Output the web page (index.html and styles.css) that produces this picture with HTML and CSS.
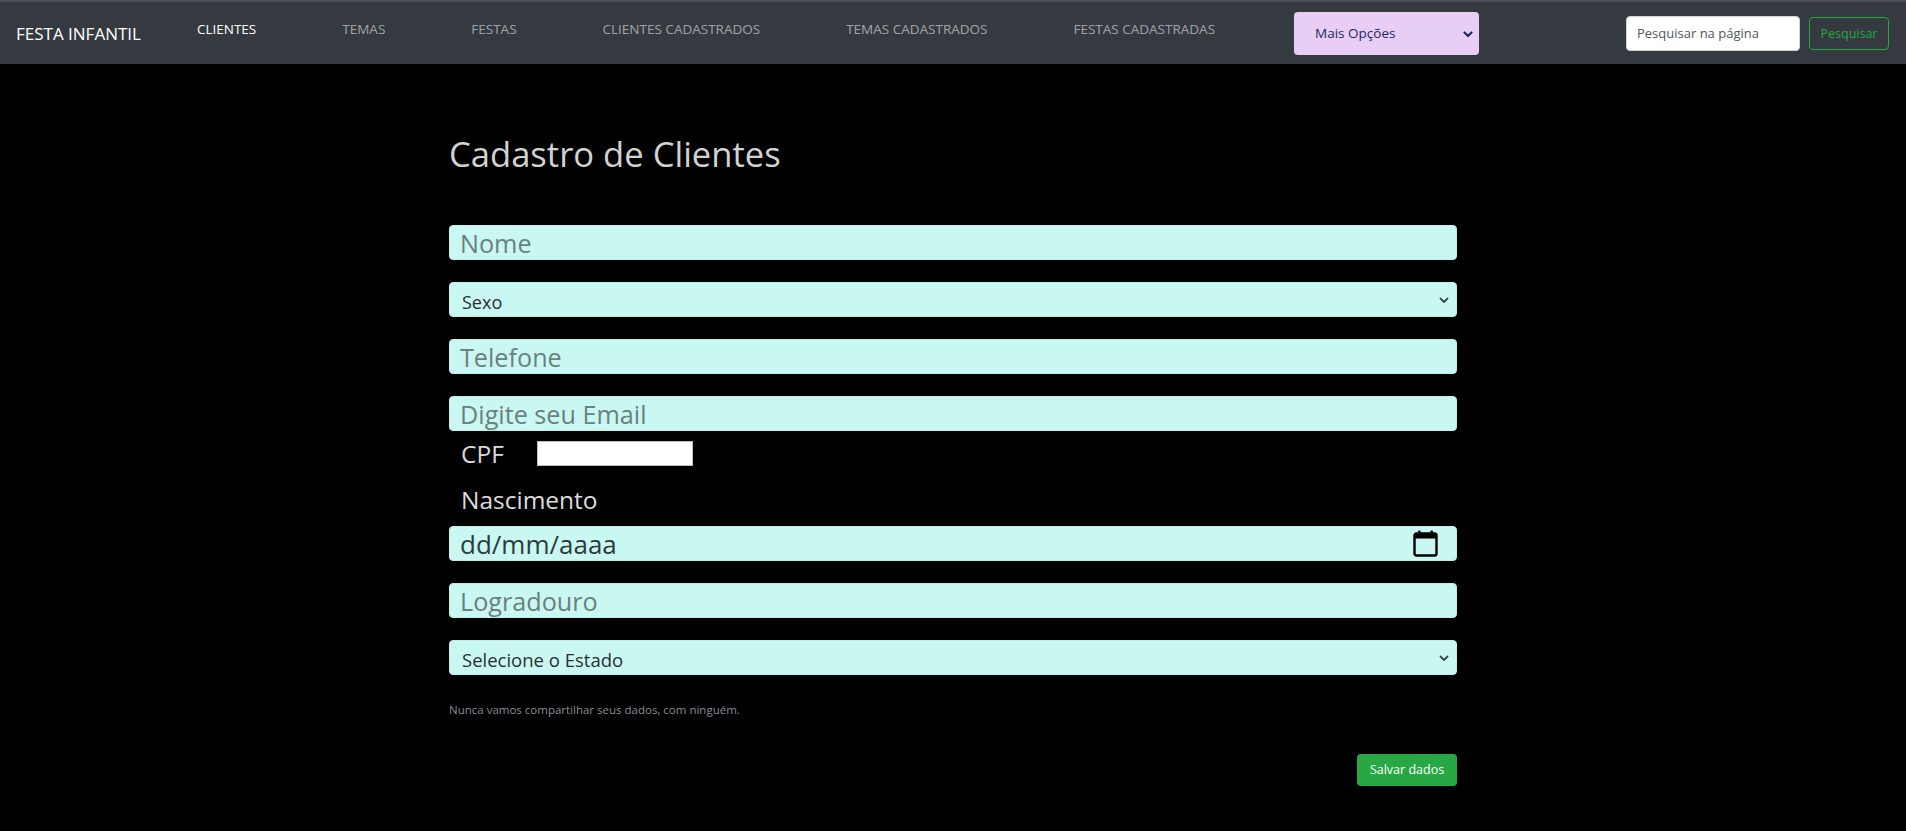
FILE: index.html
```html
<!DOCTYPE html>
<html lang="pt-BR">
<head>
<meta charset="utf-8">
<title>Cadastro de Clientes</title>
<link rel="stylesheet" href="styles.css">
</head>
<body>
<nav class="navbar">
  <span class="brand">FESTA INFANTIL</span>
  <ul class="nav">
    <li><a class="active" href="#">CLIENTES</a></li>
    <li><a href="#">TEMAS</a></li>
    <li><a href="#">FESTAS</a></li>
    <li><a href="#">CLIENTES CADASTRADOS</a></li>
    <li><a href="#">TEMAS CADASTRADOS</a></li>
    <li><a href="#">FESTAS CADASTRADAS</a></li>
  </ul>
  <div class="more-wrap">
    <select class="more"><option>Mais Opções</option></select>
    <svg class="more-chev" width="10" height="7" viewBox="0 0 10 7"><polyline points="1.5,1.5 5,5 8.5,1.5" fill="none" stroke="#1c2a5c" stroke-width="2.2" stroke-linecap="round" stroke-linejoin="round"/></svg>
  </div>
  <form class="search">
    <input class="search-input" type="text" placeholder="Pesquisar na página">
    <button class="search-btn" type="button">Pesquisar</button>
  </form>
</nav>

<main class="container">
  <h1 class="title">Cadastro de Clientes</h1>
  <form class="form">
    <input class="field" type="text" placeholder="Nome">
    <div class="select-wrap">
      <select class="field field-select"><option>Sexo</option></select>
      <svg class="chev" width="10" height="7" viewBox="0 0 10 7"><polyline points="1.5,1.5 5,5 8.5,1.5" fill="none" stroke="#3d4a4a" stroke-width="1.8" stroke-linecap="round" stroke-linejoin="round"/></svg>
    </div>
    <input class="field" type="text" placeholder="Telefone">
    <input class="field field-last" type="email" placeholder="Digite seu Email">
    <div class="cpf-row">
      <label class="cpf-label">CPF</label>
      <input class="cpf-input" type="text">
    </div>
    <label class="birth-label">Nascimento</label>
    <div class="date-wrap">
      <input class="field field-date" type="text" placeholder="dd/mm/aaaa">
      <svg class="cal" width="25" height="27" viewBox="0 0 25 27">
        <rect x="5" y="0.5" width="2.6" height="5" rx="1" fill="#000"/>
        <rect x="17.4" y="0.5" width="2.6" height="5" rx="1" fill="#000"/>
        <rect x="1.5" y="3.5" width="22" height="22" rx="2" fill="none" stroke="#000" stroke-width="2.4"/>
        <rect x="1.5" y="3.5" width="22" height="5" fill="#000"/>
      </svg>
    </div>
    <input class="field" type="text" placeholder="Logradouro">
    <div class="select-wrap">
      <select class="field field-select field-state"><option>Selecione o Estado</option></select>
      <svg class="chev" width="10" height="7" viewBox="0 0 10 7"><polyline points="1.5,1.5 5,5 8.5,1.5" fill="none" stroke="#3d4a4a" stroke-width="1.8" stroke-linecap="round" stroke-linejoin="round"/></svg>
    </div>
    <small class="help">Nunca vamos compartilhar seus dados, com ninguém.</small>
    <div class="actions">
      <button class="save" type="button">Salvar dados</button>
    </div>
  </form>
</main>
</body>
</html>
```

FILE: styles.css
```css
* { box-sizing: border-box; }

html, body {
  margin: 0;
  padding: 0;
  background: #000;
  font-family: "Open Sans", "Noto Sans", sans-serif;
}

/* ---------- navbar ---------- */
.navbar {
  display: flex;
  align-items: center;
  height: 64px;
  padding: 0 17px 0 16px;
  background: #343a40;
  border-top: 2px solid #4a4f55;
}

.brand {
  color: #fff;
  font-size: 17px;
  margin-right: 13px;
  white-space: nowrap;
}

.nav {
  display: flex;
  list-style: none;
  margin: 0 0 8px 0;
  padding: 0;
}

.nav a {
  display: block;
  padding: 0 43px;
  font-size: 13.5px;
  line-height: 20px;
  color: rgba(255, 255, 255, 0.55);
  text-decoration: none;
  white-space: nowrap;
}

.nav a.active { color: #fff; }

.more-wrap {
  position: relative;
  margin-left: 36px;
}

.more {
  appearance: none;
  -webkit-appearance: none;
  width: 185px;
  height: 43px;
  padding: 0 0 0 21px;
  border: none;
  border-radius: 4px;
  background: #e8cdf5;
  color: #1c2a5c;
  font-family: "Open Sans", "Noto Sans", sans-serif;
  font-size: 13.5px;
}

.more-chev {
  position: absolute;
  right: 6px;
  top: 19px;
  pointer-events: none;
}

.search {
  display: flex;
  align-items: center;
  margin-left: auto;
}

.search-input {
  width: 174px;
  height: 35px;
  padding: 0 10px;
  border: 1px solid #ced4da;
  border-radius: 4px;
  background: #fff;
  font-family: "Open Sans", "Noto Sans", sans-serif;
  font-size: 13px;
  color: #495057;
}

.search-input::placeholder { color: #50565c; }

.search-btn {
  width: 80px;
  height: 33px;
  margin-left: 9px;
  padding: 0;
  border: 1px solid #28a745;
  border-radius: 4px;
  background: transparent;
  color: #28a745;
  font-family: "Open Sans", "Noto Sans", sans-serif;
  font-size: 12.5px;
}

/* ---------- main ---------- */
.container {
  width: 1008px;
  margin: 0 auto;
  padding-top: 69px;
}

.title {
  margin: 0 0 50px 0;
  font-size: 34.6px;
  font-weight: 400;
  line-height: 1.2;
  color: #d2d2d2;
}

.form {
  display: flex;
  flex-direction: column;
}

.field {
  display: block;
  width: 100%;
  height: 35px;
  margin: 0 0 22px 0;
  padding: 2px 10px 0;
  border: 1px solid #bfeee8;
  border-radius: 4px;
  background: #c9f8f2;
  font-family: "Open Sans", "Noto Sans", sans-serif;
  font-size: 25.2px;
  color: #2b3534;
}

.field::placeholder { color: #6a817e; }

.field-last { margin-bottom: 0; }

.select-wrap, .date-wrap { position: relative; }

.field-select {
  appearance: none;
  -webkit-appearance: none;
  padding: 5px 0 0 12px;
  font-size: 18px;
  color: #2b2f33;
}

.field-state { font-size: 18.5px; }

.chev {
  position: absolute;
  right: 8px;
  top: 15px;
  pointer-events: none;
}

.cpf-row {
  display: flex;
  align-items: center;
  height: 46px;
}

.cpf-label {
  width: 88px;
  padding-left: 12px;
  font-size: 24.5px;
  color: #dcdcdc;
}

.cpf-input {
  width: 156px;
  height: 25px;
  border: 1px solid #bdbdbd;
  background: #fff;
}

.birth-label {
  display: block;
  padding-left: 12px;
  line-height: 46px;
  font-size: 24.5px;
  color: #dcdcdc;
}

.date-wrap { margin-top: 3px; }

.field-date { font-size: 26px; }

.field-date::placeholder { color: #2f3b3a; }

.cal {
  position: absolute;
  right: 19px;
  top: 4px;
  pointer-events: none;
}

.help {
  display: block;
  margin-top: 4px;
  font-size: 11.5px;
  line-height: 18px;
  color: #868e96;
}

.actions {
  display: flex;
  justify-content: flex-end;
  margin-top: 35px;
}

.save {
  width: 100px;
  height: 32px;
  padding: 0;
  border: none;
  border-radius: 4px;
  background: #28a745;
  color: #fff;
  font-family: "Open Sans", "Noto Sans", sans-serif;
  font-size: 12.5px;
}
```
